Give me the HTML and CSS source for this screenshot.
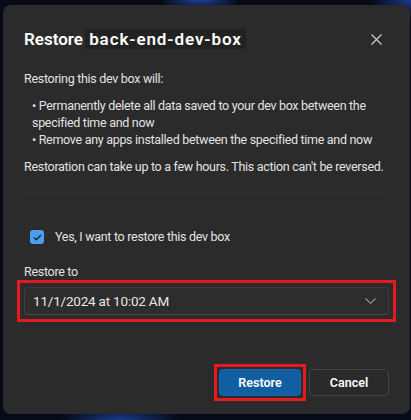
FILE: index.html
```html
<!DOCTYPE html>
<html lang="en">
<head>
  <meta charset="UTF-8" />
  <meta name="viewport" content="width=device-width, initial-scale=1.0"/>
  <title>Restore dev box</title>
  <link rel="stylesheet" href="styles.css">
</head>
<body>
  <div class="dialog" role="dialog" aria-labelledby="dlgTitle">
    <div class="dialog-head">
      <h1 id="dlgTitle">Restore <span class="box-name">back-end-dev-box</span></h1>
      <button type="button" class="close-btn" aria-label="Close">
        <svg width="11" height="11" viewBox="0 0 11 11">
          <path d="M0.5 0.5 L10.5 10.5 M10.5 0.5 L0.5 10.5" stroke="#cfcfcf" stroke-width="1.2" fill="none"/>
        </svg>
      </button>
    </div>

    <p class="intro">Restoring this dev box will:</p>
    <ul class="effects">
      <li>Permanently delete all data saved to your dev box between the specified time and now</li>
      <li>Remove any apps installed between the specified time and now</li>
    </ul>
    <p class="note">Restoration can take up to a few hours. This action can't be reversed.</p>

    <hr class="divider">

    <label class="confirm">
      <span class="checkbox">
        <svg width="9" height="7" viewBox="0 0 9 7">
          <path d="M1 3.6 L3.3 5.8 L8 1" stroke="#10243a" stroke-width="1.4" fill="none"/>
        </svg>
      </span>
      Yes, I want to restore this dev box
    </label>

    <div class="field-label">Restore to</div>
    <div class="select marked">
      <span>11/1/2024 at 10:02 AM</span>
      <svg width="11" height="6" viewBox="0 0 11 6">
        <path d="M0.5 0.5 L5.5 5.3 L10.5 0.5" stroke="#9a9a9a" stroke-width="1.1" fill="none"/>
      </svg>
    </div>

    <div class="actions">
      <button type="button" class="btn primary marked-btn">Restore</button>
      <button type="button" class="btn">Cancel</button>
    </div>
  </div>
</body>
</html>
```

FILE: styles.css
```css
html, body { height: 100%; }
body {
  margin: 0;
  padding: 5px 1px 6px 3px;
  box-sizing: border-box;
  font-family: Roboto, "Noto Sans", sans-serif;
  font-size: 12.5px;
  letter-spacing: -0.3px;
  color: #e2e2e2;
  background:
    radial-gradient(ellipse 40px 12px at 200px 0, #1d3f9a, transparent),
    radial-gradient(ellipse 60px 14px at 120px 420px, #1a3c8c, transparent),
    radial-gradient(ellipse 40px 20px at 411px 0, #1a3a88, transparent),
    #070b18;
  overflow: hidden;
}
.dialog {
  height: 409px;
  background: #2b2b2b;
  border-radius: 8px;
  padding: 23px 21px 0 21px;
  box-sizing: border-box;
  display: flex;
  flex-direction: column;
}
.dialog-head {
  display: flex;
  align-items: center;
  justify-content: space-between;
}
h1 {
  margin: 0;
  font-size: 17px;
  line-height: 22px;
  font-weight: 600;
  letter-spacing: 0;
  color: #fff;
}
.box-name {
  background: #222;
  padding: 0 4px 0 4px;
  margin-left: -2px;
  letter-spacing: 0.9px;
}
.close-btn {
  background: transparent;
  border: none;
  padding: 0;
  margin-right: 7px;
  display: flex;
  cursor: pointer;
}
.intro {
  margin: 19px 0 0;
  line-height: 20px;
}
.effects {
  margin: 8px 0 0;
  padding: 0 0 0 8px;
  list-style: none;
  line-height: 17px;
}
.effects li::before { content: "\2022\00a0"; }
.note {
  margin: 9px 0 0;
  line-height: 20px;
}
.divider {
  margin: 16px 0 0;
  border: none;
  height: 1px;
  background: #333;
}
.confirm {
  margin: 33px 0 0 6px;
  display: flex;
  align-items: center;
  gap: 11px;
  line-height: 20px;
}
.checkbox {
  width: 14px;
  height: 14px;
  border-radius: 3px;
  background: #4aa0ee;
  display: flex;
  align-items: center;
  justify-content: center;
}
.field-label {
  margin-top: 15px;
  line-height: 20px;
}
.select {
  position: relative;
  margin-top: 5px;
  height: 28px;
  box-sizing: border-box;
  border: 1px solid #3d3d3d;
  border-bottom-color: #4a4a4a;
  border-radius: 4px;
  background: #2d2d2d;
  display: flex;
  align-items: center;
  justify-content: space-between;
  padding: 0 12px 0 8px;
  font-size: 13.5px;
  letter-spacing: -0.2px;
  color: #e6e6e6;
}
.actions {
  margin-top: 54px;
  display: flex;
  justify-content: flex-end;
  gap: 8px;
}
.btn {
  position: relative;
  height: 27px;
  width: 80px;
  border-radius: 4px;
  border: 1px solid #444;
  background: #2a2a2a;
  color: #fff;
  font-family: inherit;
  font-size: 12.5px;
  font-weight: 600;
  cursor: pointer;
}
.btn.primary {
  width: 82px;
  background: #115ea3;
  border-color: #1866ad;
}

/* red highlight frames */
.marked::after,
.marked-btn::after {
  content: "";
  position: absolute;
  border: 3px solid #e5191f;
  pointer-events: none;
}
.marked::after { inset: -8px; }
.marked-btn::after { inset: -6px; }
```
